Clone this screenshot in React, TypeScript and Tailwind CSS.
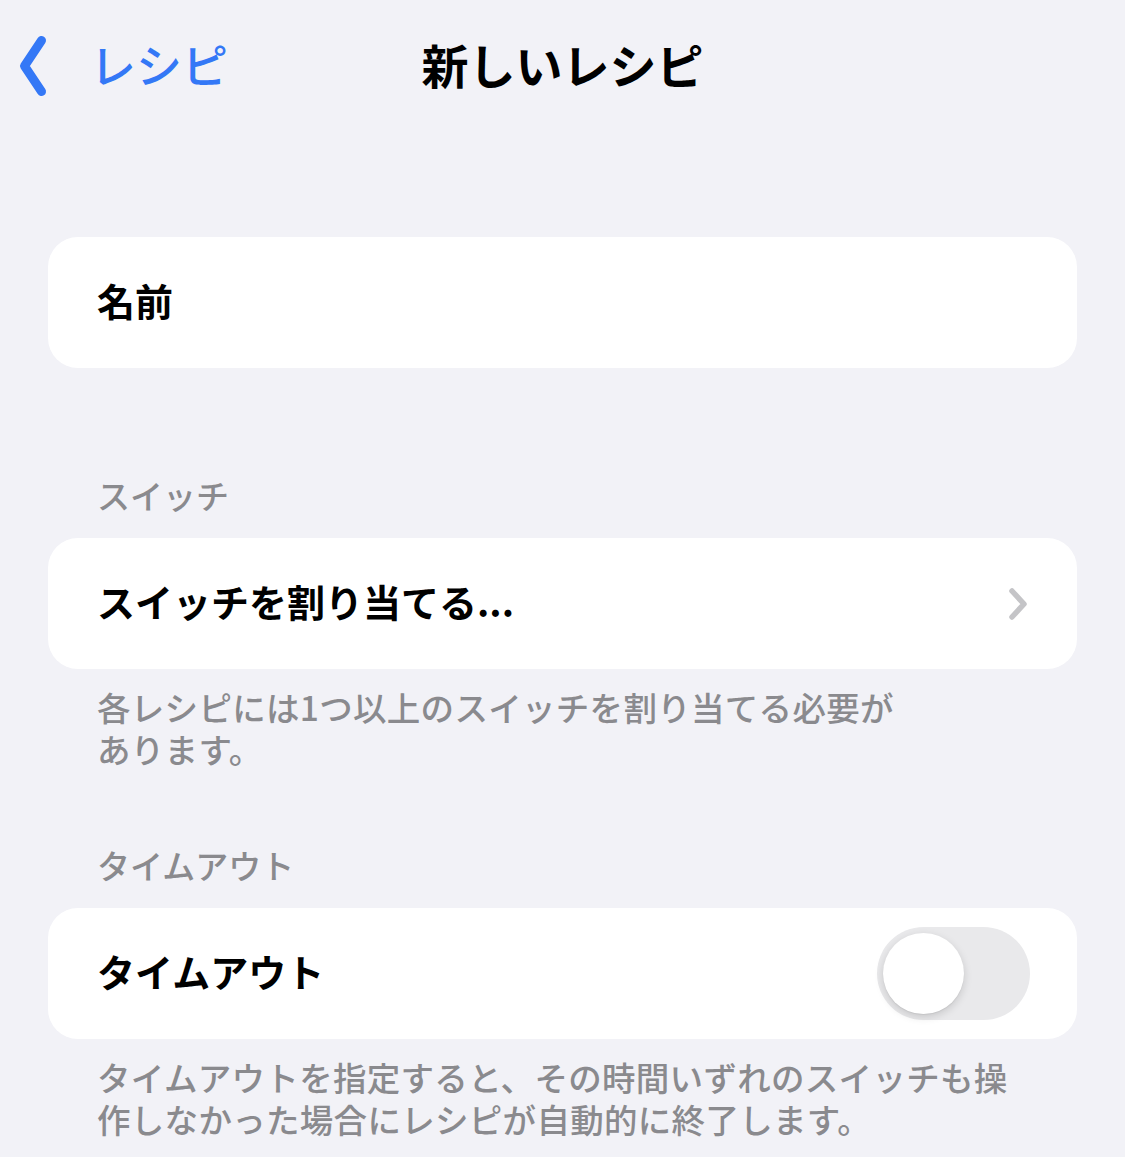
import React, { useState } from 'react';

const font = { fontFamily: '"Noto Sans CJK JP", "Noto Sans", sans-serif' };

const Toggle: React.FC<{ on: boolean; onChange: (v: boolean) => void }> = ({ on, onChange }) => (
  <button
    type="button"
    onClick={() => onChange(!on)}
    className={`relative w-[153px] h-[93px] rounded-full transition-colors ${on ? 'bg-[#34c759]' : 'bg-[#e9e9eb]'}`}
  >
    <span
      className={`absolute top-[6px] left-[6px] w-[81px] h-[81px] rounded-full bg-white shadow-[0_3px_8px_rgba(0,0,0,0.15),0_1px_1px_rgba(0,0,0,0.06)] transition-transform ${on ? 'translate-x-[60px]' : 'translate-x-0'}`}
    />
  </button>
);

const SectionHeader: React.FC<{ children: React.ReactNode; className?: string }> = ({ children, className }) => (
  <div className={`px-[97px] text-[33px] leading-[42px] font-medium text-[#8a8a8e] ${className ?? ''}`}>{children}</div>
);

// each line is its own block so the wrap matches the device
const Footnote: React.FC<{ lines: string[] }> = ({ lines }) => (
  <div className="mt-[17px] px-[97px] text-[33.5px] leading-[42px] font-medium text-[#8a8a8e] tracking-[0.3px]">
    {lines.map(l => (
      <div key={l} className="h-[42px] whitespace-nowrap">{l}</div>
    ))}
  </div>
);

export default function App() {
  const [timeout, setTimeoutOn] = useState(false);

  return (
    <div className="min-h-[1157px] bg-[#f2f2f7] text-black overflow-hidden" style={font}>
      {/* nav bar */}
      <div className="relative h-[130px] flex items-center pb-[4px]">
        <button type="button" className="flex items-center text-[#3478f6]">
          <svg width="50" height="70" viewBox="0 0 50 70" className="mr-[40px]">
            <polyline
              points="41.5,12.5 24.5,38 41.5,63.5"
              fill="none"
              stroke="currentColor"
              strokeWidth="9"
              strokeLinecap="round"
              strokeLinejoin="round"
            />
          </svg>
          <span className="text-[46px] leading-none font-medium">レシピ</span>
        </button>
        <h1 className="absolute left-1/2 -translate-x-1/2 text-[47px] leading-none font-bold">新しいレシピ</h1>
      </div>

      {/* name */}
      <div className="mt-[107px] mx-[48px] h-[131px] rounded-[30px] bg-white flex items-center px-[49px] pb-[6px]">
        <span className="text-[38px] font-bold">名前</span>
      </div>

      {/* switches */}
      <SectionHeader className="mt-[106px]">スイッチ</SectionHeader>
      <div className="mt-[22px] mx-[48px] h-[131px] rounded-[30px] bg-white flex items-center justify-between pl-[49px] pr-[46px]">
        <span className="text-[38px] font-bold -mt-[6px]">スイッチを割り当てる...</span>
        <svg width="24" height="36" viewBox="0 0 24 36">
          <polyline
            points="5,5 17,18 5,31"
            fill="none"
            stroke="#c4c4c7"
            strokeWidth="5.5"
            strokeLinecap="round"
            strokeLinejoin="round"
          />
        </svg>
      </div>
      <Footnote lines={['各レシピには1つ以上のスイッチを割り当てる必要が', 'あります。']} />

      {/* timeout */}
      <SectionHeader className="mt-[74px]">タイムアウト</SectionHeader>
      <div className="mt-[22px] mx-[48px] h-[131px] rounded-[30px] bg-white flex items-center justify-between pl-[49px] pr-[47px]">
        <span className="text-[38px] font-bold -mt-[6px]">タイムアウト</span>
        <Toggle on={timeout} onChange={setTimeoutOn} />
      </div>
      <Footnote
        lines={['タイムアウトを指定すると、その時間いずれのスイッチも操', '作しなかった場合にレシピが自動的に終了します。']}
      />
    </div>
  );
}
